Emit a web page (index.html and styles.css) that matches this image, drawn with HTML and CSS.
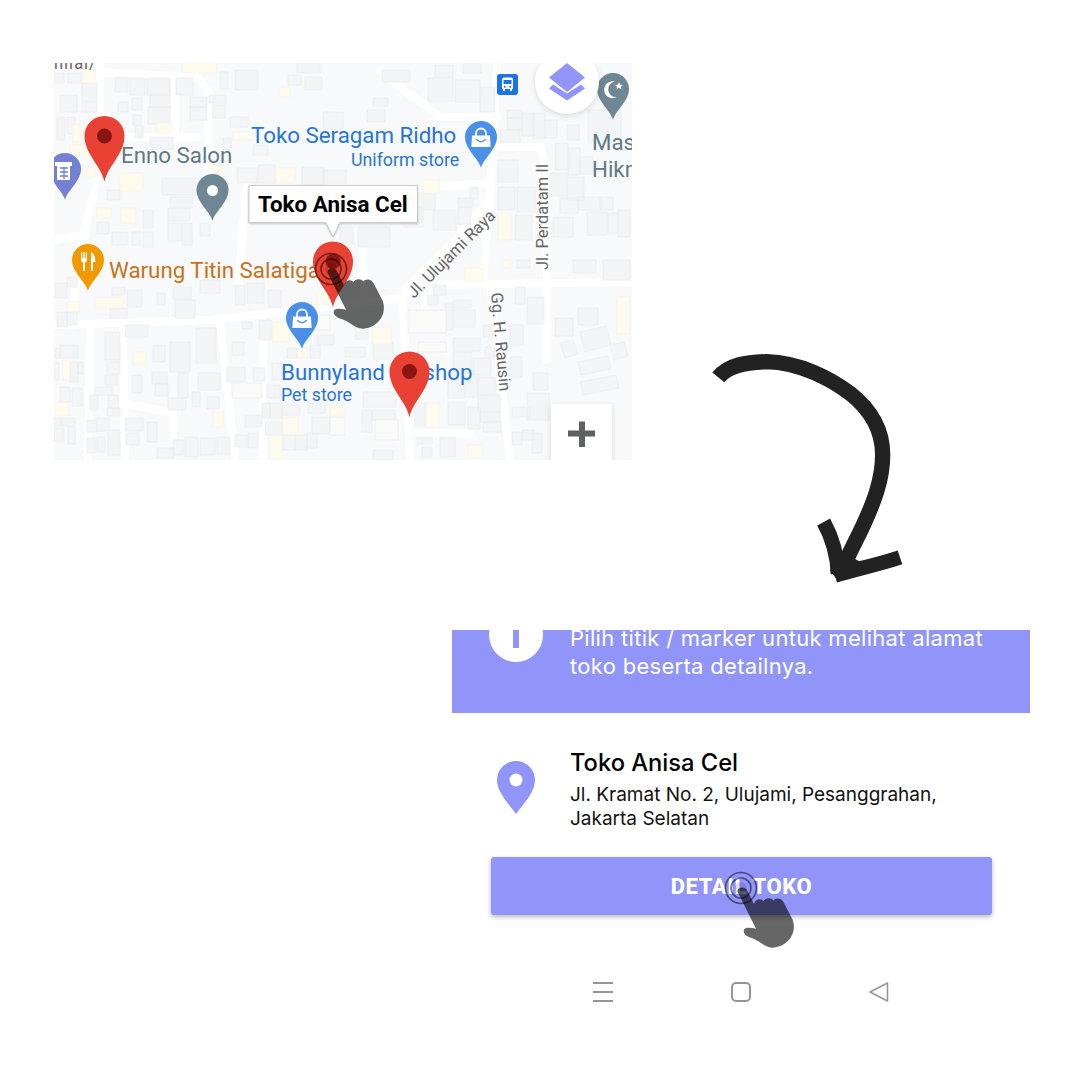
FILE: index.html
```html
<!DOCTYPE html>
<html lang="id">
<head>
<meta charset="utf-8">
<title>Toko Anisa Cel</title>
<link rel="stylesheet" href="styles.css">
</head>
<body>
<main class="page">
  <section class="top-row">
    <svg class="map" viewBox="54 63 578 397" width="578" height="397" xmlns="http://www.w3.org/2000/svg">
      <defs>
        <path id="pin-big" d="M0,66C-3,50-20,38-20,20A20,20 0 1 1 20,20C20,38 3,50 0,66Z"/>
        <path id="pin-small" d="M0,47C-2,38-16,28-16,16A16,16 0 1 1 16,16C16,28 2,38 0,47Z"/>
        <g id="red-pin">
          <use href="#pin-big" class="pin-red"/>
          <circle cx="0" cy="20" r="7.5" class="pin-red-dot"/>
        </g>
        <g id="bag-pin">
          <use href="#pin-small" class="pin-blue"/>
          <path d="M-5,15V12.5a5,5 0 0 1 10,0V15" class="bag-handle"/>
          <path d="M-9,14.5H9L9.6,26H-9.6Z" class="bag-body"/>
          <path d="M-4.5,18.5q4.500,4.500 9,0" class="bag-smile"/>
        </g>
        <g id="hand">
          <g transform="scale(.3333) translate(-93,-100)">
            <path class="hand-shape" d="M83,112C79,98 104,92 112,108L132,148C135,132 155,130 160,140C165,128 185,128 190,138C195,128 215,128 222,145L248,195C262,235 235,275 190,279C165,280 150,258 125,250C108,245 98,235 102,225C105,218 120,218 138,222Z"/>
          </g>
          <circle r="6" class="ring-core"/>
          <circle r="15.500" class="ring"/>
          <circle r="10" class="ring"/>
        </g>
      </defs>

      <rect x="54" y="63" width="578" height="397" class="map-bg"/>

      <g class="base">
        <g class="roads">
          <path d="M54,325L210,320L320,308L400,298L420,285L632,282"/>
          <path d="M497,63L490,200L483,280"/>
          <path d="M490,285L510,460"/>
          <path d="M403,303L410,460"/>
          <path d="M405,290L455,240L490,200"/>
          <path d="M100,63V170L90,207L78,260L72,325"/>
          <path d="M100,72L197,77L208,90V180"/>
          <path d="M127,137H197"/>
          <path d="M175,80V137"/>
          <path d="M380,70L400,87L440,117H497"/>
          <path d="M497,147H540L547,170V360"/>
          <path d="M390,190L490,183"/>
          <path d="M90,325L88,460"/>
          <path d="M123,327L125,460"/>
          <path d="M220,323L235,460"/>
          <path d="M263,315V460"/>
          <path d="M123,403L173,413V437"/>
          <path d="M417,433H470"/>
          <path d="M248,175L243,225L238,300"/>
          <path d="M362,240L365,300"/>
          <path d="M54,240L85,235"/>
          <path d="M440,285L425,300V320"/>
        </g>

        <path class="bldg" d="M115,77h13v15h-13zM130,78h15v17h-15zM147,78h23v17h-23zM150,95h20v12h-20zM148,107h22v17h-22zM132,98h10v12h-10zM118,102h10v10h-10zM133,115h8v10h-8zM135,126h8v12h-8zM150,137h23v12h-23zM176,78h17v17h-17zM190,97h17v10h-17zM190,107h17v13h-17zM209,95h17v8h-17zM213,105h12v13h-12zM220,72h8v17h-8zM235,70h23v20h-23zM230,117h18v10h-18zM223,138h8v12h-8zM253,145h15v10h-15zM288,75h13v10h-13zM323,112h20v20h-20zM297,63h23v10h-23zM305,77h17v13h-17zM237,168h20v15h-20zM258,165h17v18h-17zM302,167h22v18h-22zM323,170h23v13h-23zM162,178h33v17h-33zM170,197h23v10h-23zM168,208h22v13h-22zM143,210h10v18h-10zM168,223h13v18h-13zM182,223h10v22h-10zM200,223h10v13h-10zM112,232h15v13h-15zM132,232h8v13h-8zM143,232h10v15h-10zM97,222h12v12h-12zM107,190h13v10h-13zM57,117h8v23h-8zM67,117h8v17h-8zM60,95h17v17h-17zM82,83h15v18h-15zM82,102h15v10h-15zM54,73h10v10h-10zM68,73h13v10h-13z"/>
        <path class="bldg" d="M382,70h28v12h-28zM435,65h18v12h-18zM428,78h25v23h-25zM455,80h25v22h-25zM463,63h18v10h-18zM373,98h15v8h-15zM367,110h18v12h-18zM480,87h15v25h-15zM507,110h15v8h-15zM507,118h15v12h-15zM500,130h20v12h-20zM522,113h12v23h-12zM533,113h12v25h-12zM545,120h12v18h-12zM567,125h12v15h-12zM588,110h33v33h-33zM498,160h20v22h-20zM498,187h17v23h-17zM517,187h18v25h-18zM515,215h17v25h-17zM555,143h13v27h-13zM568,148h12v27h-12zM580,157h13v17h-13zM550,173h17v23h-17zM567,177h17v23h-17zM560,198h18v15h-18zM578,197h22v13h-22zM600,197h13v13h-13zM587,212h20v23h-20zM608,213h10v20h-10zM618,210h12v27h-12zM553,217h20v20h-20zM422,193h13v17h-13zM458,198h15v9h-15zM458,207h13v17h-13zM433,210h23v20h-23zM470,187h8v12h-8zM358,227h32v20h-32zM340,227h13v17h-13zM403,207h20v20h-20z"/>
        <path class="bldg" d="M55,283h12v15h-12zM67,277h10v10h-10zM57,312h10v15h-10zM67,312h10v13h-10zM112,287h13v8h-13zM110,308h17v10h-17zM127,290h15v17h-15zM157,293h8v12h-8zM175,300h20v18h-20zM173,287h18v12h-18zM200,280h20v13h-20zM235,285h10v20h-10zM247,283h17v20h-17zM268,290h13v17h-13zM125,325h23v12h-23zM105,332h15v28h-15zM107,362h13v12h-13zM105,375h13v10h-13zM95,387h17v8h-17zM90,395h8v15h-8zM108,395h10v13h-10zM107,408h13v8h-13zM60,345h18v13h-18zM55,348h5v10h-5zM54,363h5v17h-5zM70,362h8v20h-8zM78,362h5v12h-5zM60,387h10v15h-10zM72,388h10v18h-10zM62,418h13v8h-13zM54,418h7v8h-7zM54,428h10v13h-10zM68,427h7v17h-7zM87,420h10v12h-10zM87,438h8v15h-8zM97,437h8v15h-8zM108,430h12v25h-12zM97,418h12v13h-12zM153,345h12v17h-12zM170,342h20v30h-20zM196,328h20v35h-20zM232,342h12v13h-12zM152,372h15v12h-15zM155,383h13v13h-13zM132,375h10v18h-10zM178,373h10v25h-10zM198,373h22v17h-22zM207,397h12v12h-12zM192,392h8v15h-8zM168,398h18v12h-18zM227,367h18v15h-18zM253,368h12v13h-12zM272,363h10v17h-10zM267,385h13v13h-13zM262,403h8v15h-8zM270,403h12v15h-12zM282,405h18v10h-18zM308,403h17v10h-17zM245,415h17v12h-17zM265,422h17v13h-17zM312,417h18v17h-18zM283,435h12v15h-12zM295,435h12v15h-12zM307,433h10v15h-10zM235,435h12v12h-12zM248,433h10v15h-10zM217,437h13v17h-13zM200,438h15v17h-15zM185,437h13v20h-13zM173,440h10v15h-10zM157,448h17v10h-17zM125,418h18v13h-18zM147,422h10v20h-10zM126,433h13v12h-13zM259,320h12v20h-12zM242,322h10v7h-10zM317,335h17v10h-17zM287,348h10v10h-10zM310,345h10v13h-10z"/>
        <path class="bldg" d="M453,310h22v17h-22zM453,338h27v13h-27zM453,352h18v20h-18zM473,358h18v17h-18zM478,377h17v18h-17zM478,395h22v17h-22zM480,412h20v10h-20zM483,422h18v10h-18zM448,378h17v20h-17zM465,377h12v20h-12zM362,410h10v22h-10zM363,392h33v15h-33zM372,410h23v10h-23zM415,403h10v23h-10zM448,402h17v23h-17zM468,407h12v22h-12zM417,437h15v7h-15zM422,447h10v10h-10zM440,437h15v20h-15zM373,450h20v10h-20zM512,407h18v10h-18zM512,432h10v13h-10zM522,430h12v10h-12zM532,433h10v20h-10zM527,393h22v27h-22zM533,373h15v17h-15zM510,357h12v20h-12zM510,325h13v20h-13zM515,287h10v17h-10zM527,297h17v27h-17zM555,318h18v18h-18zM578,308h20v17h-20zM433,285h13v10h-13zM428,295h10v10h-10zM445,303h7v27h-7zM453,300h18v8h-18zM483,325h10v12h-10zM485,347h10v10h-10zM355,327h13v12h-13zM345,347h20v10h-20zM373,342h20v17h-20zM517,260h13v8h-13zM603,260h27v20h-27zM573,260h23v13h-23z"/>
        <path class="bldg" d="M560,343l13,-3l5,14l-13,4zM580,332l26,-6l5,19l-26,7zM578,362l30,-6l3,13l-30,6zM580,382l36,-7l3,13l-36,7zM610,345l14,-3l4,14l-14,4z"/>
        <path class="bldg light" d="M408,310h38v23h-38zM418,342h28v10h-28zM375,420h23v20h-23zM232,383h30v15h-30zM330,417h15v18h-15zM317,315h13v15h-13z"/>
        <path class="yel" d="M182,63h35v10h-35zM83,68h13v15h-13zM157,123h15v10h-15zM73,125h10v17h-10zM70,145h27v10h-27zM83,167h13v10h-13zM120,173h23v18h-23zM121,208h15v15h-15zM97,208h15v10h-15zM280,87h10v10h-10zM233,132h20v8h-20zM277,168h18v15h-18zM210,165h12v8h-12zM423,180h17v13h-17zM498,213h13v27h-13zM67,302h13v10h-13zM95,298h28v10h-28zM63,360h7v20h-7zM54,403h15v13h-15zM133,352h13v12h-13zM213,412h10v15h-10zM283,418h15v15h-15zM330,405h15v10h-15zM270,437h12v22h-12zM273,322h17v20h-17zM298,348h10v10h-10zM317,293h12v12h-12zM427,403h13v25h-13zM468,445h15v13h-15zM465,268h18v13h-18zM373,327h18v17h-18zM502,260h8v8h-8zM617,297h13v37h-13z"/>
      </g>

      <text x="54" y="69" class="lbl road-lbl clip-lbl">niial/</text>
      <text x="121" y="163" class="lbl grey">Enno Salon</text>
      <text x="251" y="143" class="lbl blue">Toko Seragam Ridho</text>
      <text x="351" y="166" class="lbl blue sub">Uniform store</text>
      <text x="109" y="278" class="lbl orange">Warung Titin Salatiga</text>
      <text x="281" y="380" class="lbl blue">Bunnyland Petshop</text>
      <text x="281" y="401" class="lbl blue sub">Pet store</text>
      <text x="592" y="150" class="lbl grey">Masjid</text>
      <text x="592" y="177" class="lbl grey">Hikmah</text>
      <text transform="translate(548,270) rotate(-90)" class="lbl road-lbl">Jl. Perdatam II</text>
      <text transform="translate(414,299) rotate(-45)" class="lbl road-lbl">Jl. Ulujami Raya</text>
      <text transform="translate(491,293) rotate(85)" class="lbl road-lbl">Gg. H. Rausin</text>

      <use href="#red-pin" x="104.500" y="116"/>
      <use href="#red-pin" x="409.500" y="351.500"/>
      <use href="#red-pin" x="333" y="241.500"/>

      <g transform="translate(212.500,174)">
        <use href="#pin-small" class="pin-slate"/>
        <circle cy="16.500" r="5.500" class="white"/>
      </g>
      <g transform="translate(613,73)">
        <use href="#pin-small" class="pin-slate"/>
        <path d="M2,8.500A8.500,8.500 0 1 0 4,24A7,7 0 1 1 2,8.500Z" class="white"/>
        <path d="M6,9l1.200,2.700 2.900,.2-2.200,1.900 .7,2.800-2.600,-1.500-2.600,1.500 .7,-2.800-2.200,-1.900 2.900,-.2Z" class="white"/>
      </g>
      <use href="#bag-pin" x="481" y="121"/>
      <use href="#bag-pin" x="302" y="302"/>
      <g transform="translate(65,153)">
        <use href="#pin-small" class="pin-indigo"/>
        <path d="M-10,9H7V13H5V27H-8V13H-10Z" class="white"/>
        <path d="M-5,15H3M-5,19H3M-5,23H3M-1,14V26" class="indigo-line"/>
      </g>
      <g transform="translate(88,244)">
        <use href="#pin-small" class="pin-orange"/>
        <path d="M-7,8V15.500Q-7,18 -5,18.500V27H-3V18.500Q-1,18 -1,15.500V8H-2.200V14H-3.300V8H-4.700V14H-5.800V8Z" class="white"/>
        <path d="M3,27V8Q7.500,10 7.500,18H5V27Z" class="white"/>
      </g>

      <g>
        <rect x="497" y="74" width="21" height="21" rx="3" class="bus-bg"/>
        <path d="M502,79.500Q502,77.500 504,77.500H511Q513,77.500 513,79.500V89H512V91H510V89H505V91H503V89H502Z" class="white"/>
        <path d="M503.500,80H511.500V84H503.500Z" class="bus-win"/>
        <circle cx="504.800" cy="86.700" r="1" class="bus-win"/>
        <circle cx="510.200" cy="86.700" r="1" class="bus-win"/>
      </g>

      <circle cx="567" cy="82" r="32" class="white shadow"/>
      <path d="M567,63L585,77.500L567,92L549,77.500Z" class="layer"/>
      <path d="M549,88.500L553,84.500L567,93.500L581,84.500L585,88.500L567,100.500Z" class="layer"/>

      <rect x="551" y="404" width="61" height="70" rx="2" class="white shadow"/>
      <path d="M579,421.500H585V430.500H595V436.500H585V447H579V436.500H568V430.500H579Z" class="plus"/>

      <path d="M249,185.500H417.500V222.500H340L333,237L326,222.500H249Z" class="callout"/>
      <text x="258" y="212" class="callout-text">Toko Anisa Cel</text>

      <use href="#hand" x="331" y="269"/>
    </svg>

    <svg class="arrow" viewBox="0 0 660 750" width="220" height="250" xmlns="http://www.w3.org/2000/svg">
      <path class="arrow-line" d="M55,112C85,75 140,66 200,65C300,68 390,115 450,160C520,215 548,280 548,345C548,420 520,490 490,555C470,600 445,640 425,695"/>
      <path class="arrow-head" d="M371,546C395,590 412,640 414,702"/>
      <path class="arrow-head" d="M600,652C540,672 480,685 405,706"/>
      <path class="arrow-tip" d="M390,690L435,640L480,665L465,705L415,725Z"/>
    </svg>
  </section>

  <section class="panel">
    <div class="banner">
      <div class="info-circle"><span class="info-bar"></span></div>
      <p class="banner-text">Pilih titik / marker untuk melihat alamat<br>toko beserta detailnya.</p>
    </div>

    <div class="store">
      <svg class="store-pin" viewBox="0 0 38 53" width="38" height="53" xmlns="http://www.w3.org/2000/svg">
        <path class="store-pin-shape" fill-rule="evenodd" d="M19,53C11,42 0,31 0,19A19,19 0 1 1 38,19C38,31 27,42 19,53ZM19,12.500A6.500,6.500 0 1 0 19,25.500A6.500,6.500 0 1 0 19,12.500Z"/>
      </svg>
      <div class="store-info">
        <h2 class="store-name">Toko Anisa Cel</h2>
        <p class="store-address">Jl. Kramat No. 2, Ulujami, Pesanggrahan,<br>Jakarta Selatan</p>
      </div>
    </div>

    <div class="button">
      <span class="button-text">DETAIL TOKO</span>
      <svg class="button-hand" viewBox="-20 -20 80 80" width="80" height="80" xmlns="http://www.w3.org/2000/svg">
        <use href="#hand"/>
      </svg>
    </div>

    <nav class="nav">
      <svg viewBox="0 0 20 20" width="20" height="20" xmlns="http://www.w3.org/2000/svg"><path class="nav-icon" d="M0,1H20M0,10H20M0,19H20"/></svg>
      <svg viewBox="0 0 20 20" width="20" height="20" xmlns="http://www.w3.org/2000/svg"><rect class="nav-icon" x="1" y="1" width="18" height="18" rx="4"/></svg>
      <svg viewBox="0 0 20 20" width="20" height="20" xmlns="http://www.w3.org/2000/svg"><path class="nav-icon thin" d="M18.500,1V19L1,10Z"/></svg>
    </nav>
  </section>
</main>
</body>
</html>
```

FILE: styles.css
```css
* { box-sizing: border-box; }
html, body { margin: 0; padding: 0; background: #fff; }
.page { width: 1080px; height: 1080px; overflow: hidden; padding-top: 63px; }

.top-row { display: flex; align-items: flex-start; padding-left: 54px; height: 527px; }
.map { display: block; flex: none; }
.arrow { display: block; flex: none; margin: 277px 0 0 68px; }
.arrow-line, .arrow-head { fill: none; stroke: #222; stroke-linejoin: round; }
.arrow-line { stroke-width: 46; }
.arrow-head { stroke-width: 44; }
.arrow-tip { fill: #222; }

.map-bg { fill: #f8f9fa; }
.base { filter: blur(.5px); }
.roads path { fill: none; stroke: #fff; stroke-width: 8; stroke-linecap: round; stroke-linejoin: round; }
.bldg { fill: #f3f4f5; stroke: #ebecee; stroke-width: .8; }
.bldg.light { fill: #fafaf9; }
.yel { fill: #fdfbee; stroke: #f6f3e2; stroke-width: .6; }

.lbl { font-family: Roboto, "Liberation Sans", sans-serif; font-size: 22.300px; }
.grey { fill: #5f7a85; }
.blue { fill: #2675d8; }
.orange { fill: #c9711a; }
.sub { font-size: 17.800px; }
.road-lbl { font-size: 16.500px; fill: #666; }
.clip-lbl { letter-spacing: 1px; }

.pin-red { fill: #e94235; }
.pin-red-dot { fill: #8a1511; }
.pin-blue { fill: #4a90e8; }
.pin-slate { fill: #6f8794; }
.pin-indigo { fill: #7480d4; }
.pin-orange { fill: #f29900; }
.white { fill: #fff; }
.indigo-line { fill: none; stroke: #7480d4; stroke-width: 1.300; }
.bag-handle { fill: none; stroke: #fff; stroke-width: 1.800; }
.bag-body { fill: #fff; }
.bag-smile { fill: none; stroke: #4a90e8; stroke-width: 1.300; stroke-linecap: round; }
.bus-bg { fill: #1a73e8; }
.bus-win { fill: #1a73e8; }
.shadow { filter: drop-shadow(0 2px 3px rgba(0, 0, 0, .12)); }
.layer { fill: #9195fa; }
.plus { fill: #5f6063; }
.callout { fill: #fff; stroke: #c9c9c9; stroke-width: 1; filter: drop-shadow(0 1px 1px rgba(0, 0, 0, .2)); }
.callout-text { font-family: Roboto, "Liberation Sans", sans-serif; font-weight: 700; font-size: 22.400px; fill: #000; }

.hand-shape { fill: #000; fill-opacity: .6; }
.ring { fill: none; stroke: #000; stroke-opacity: .5; stroke-width: 1.700; }
.ring-core { fill: #000; fill-opacity: .12; }

.panel { width: 578px; margin: 40px 0 0 452px; font-family: Inter, "Liberation Sans", sans-serif; }

.banner { display: flex; background: #9195fa; height: 83px; overflow: hidden; padding-left: 37px; }
.info-circle { flex: none; width: 54px; height: 54px; margin-top: -22px; border-radius: 50%; background: #fff; display: flex; justify-content: center; }
.info-bar { display: block; width: 6px; height: 18px; margin-top: 22px; background: #9195fa; }
.banner-text { margin: -6px 0 0 27px; color: #fff; font-size: 22px; line-height: 28px; white-space: nowrap; letter-spacing: .3px; }

.store { display: flex; padding: 48px 0 0 45px; height: 144px; }
.store-pin { flex: none; display: block; }
.store-pin-shape { fill: #9195fa; }
.store-info { margin-left: 35px; margin-top: -13px; }
.store-name { margin: 0; font-size: 23.700px; font-weight: 500; line-height: 30px; color: #000; white-space: nowrap; }
.store-address { margin: 5px 0 0; font-size: 19px; line-height: 24px; color: #111; white-space: nowrap; }

.button { position: relative; margin-left: 39px; width: 501px; height: 58px; background: #9195fa; border-radius: 3px; box-shadow: 0 2px 5px rgba(0, 0, 0, .28); display: flex; align-items: center; justify-content: center; }
.button-text { font-family: Roboto, "Liberation Sans", sans-serif; font-weight: 800; font-size: 22px; letter-spacing: .6px; color: #fff; white-space: nowrap; }
.button-hand { position: absolute; left: 230px; top: 11px; }

.nav { display: flex; justify-content: space-between; width: 296px; margin: 67px 0 0 141px; }
.nav svg { display: block; }
.nav-icon { fill: none; stroke: #959595; stroke-width: 2; stroke-linejoin: round; }
.nav-icon.thin { stroke-width: 1.500; }
```
